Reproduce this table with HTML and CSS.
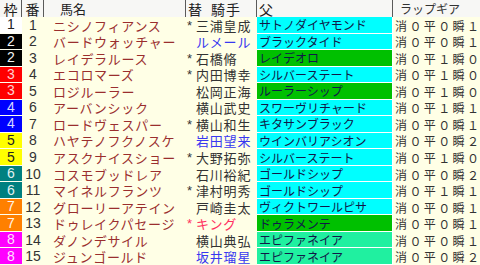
FILE: index.html
```html
<!DOCTYPE html>
<html lang="ja">
<head>
<meta charset="utf-8">
<link rel="stylesheet" href="styles.css">
</head>
<body>
<div class="table">
  <div class="row head">
    <div class="h c-waku">枠</div>
    <div class="h c-ban">番</div>
    <div class="h c-name">馬名</div>
    <div class="h c-jockey"><span class="kae">替</span><span class="jk">騎手</span></div>
    <div class="h c-sire">父</div>
    <div class="h c-lap">ラップギア</div>
  </div>

  <div class="row"><div class="waku w1">1</div><div class="ban">1</div><div class="name">ニシノフィアンス</div><div class="jockey"><span class="mark">*</span>三浦皇成</div><div class="sire s-cyan">サトノダイヤモンド</div><div class="lap">消０平０瞬１</div></div>
  <div class="row"><div class="waku w2">2</div><div class="ban">2</div><div class="name">バードウォッチャー</div><div class="jockey blue"><span class="mark"></span>ルメール</div><div class="sire s-cyan">ブラックタイド</div><div class="lap">消０平０瞬１</div></div>
  <div class="row"><div class="waku w2">2</div><div class="ban">3</div><div class="name">レイデラルース</div><div class="jockey"><span class="mark">*</span>石橋脩</div><div class="sire s-green">レイデオロ</div><div class="lap">消０平１瞬０</div></div>
  <div class="row"><div class="waku w3">3</div><div class="ban">4</div><div class="name">エコロマーズ</div><div class="jockey"><span class="mark">*</span>内田博幸</div><div class="sire s-cyan">シルバーステート</div><div class="lap">消０平１瞬０</div></div>
  <div class="row"><div class="waku w3">3</div><div class="ban">5</div><div class="name">ロジルーラー</div><div class="jockey"><span class="mark"></span>松岡正海</div><div class="sire s-green">ルーラーシップ</div><div class="lap">消０平１瞬０</div></div>
  <div class="row"><div class="waku w4">4</div><div class="ban">6</div><div class="name">アーバンシック</div><div class="jockey"><span class="mark"></span>横山武史</div><div class="sire s-cyan">スワーヴリチャード</div><div class="lap">消０平１瞬１</div></div>
  <div class="row"><div class="waku w4">4</div><div class="ban">7</div><div class="name">ロードヴェスパー</div><div class="jockey"><span class="mark">*</span>横山和生</div><div class="sire s-cyan">キタサンブラック</div><div class="lap">消０平０瞬１</div></div>
  <div class="row"><div class="waku w5">5</div><div class="ban">8</div><div class="name">ハヤテノフクノスケ</div><div class="jockey blue"><span class="mark"></span>岩田望来</div><div class="sire s-cyan">ウインバリアシオン</div><div class="lap">消０平０瞬２</div></div>
  <div class="row"><div class="waku w5">5</div><div class="ban">9</div><div class="name">アスクナイスショー</div><div class="jockey"><span class="mark">*</span>大野拓弥</div><div class="sire s-cyan">シルバーステート</div><div class="lap">消０平１瞬０</div></div>
  <div class="row"><div class="waku w6">6</div><div class="ban">10</div><div class="name">コスモブッドレア</div><div class="jockey"><span class="mark"></span>石川裕紀</div><div class="sire s-cyan">ゴールドシップ</div><div class="lap">消０平０瞬２</div></div>
  <div class="row"><div class="waku w6">6</div><div class="ban">11</div><div class="name">マイネルフランツ</div><div class="jockey"><span class="mark">*</span>津村明秀</div><div class="sire s-cyan">ゴールドシップ</div><div class="lap">消０平１瞬１</div></div>
  <div class="row"><div class="waku w7">7</div><div class="ban">12</div><div class="name">グローリーアテイン</div><div class="jockey"><span class="mark"></span>戸崎圭太</div><div class="sire s-cyan">ヴィクトワールピサ</div><div class="lap">消０平０瞬１</div></div>
  <div class="row"><div class="waku w7">7</div><div class="ban">13</div><div class="name">ドゥレイクパセージ</div><div class="jockey red"><span class="mark">*</span>キング</div><div class="sire s-green">ドゥラメンテ</div><div class="lap">消０平０瞬１</div></div>
  <div class="row"><div class="waku w8">8</div><div class="ban">14</div><div class="name">ダノンデサイル</div><div class="jockey"><span class="mark"></span>横山典弘</div><div class="sire s-sea">エピファネイア</div><div class="lap">消０平０瞬１</div></div>
  <div class="row"><div class="waku w8">8</div><div class="ban">15</div><div class="name">ジュンゴールド</div><div class="jockey blue"><span class="mark"></span>坂井瑠星</div><div class="sire s-sea">エピファネイア</div><div class="lap">消０平０瞬２</div></div>
</div>
</body>
</html>
```

FILE: styles.css
```css
html, body {
  margin: 0;
  padding: 0;
  background: #ffffe6;
}

.table {
  width: 480px;
  height: 265px;
  display: grid;
  grid-template-rows: 17px repeat(15, 1fr);
  font-family: "Noto Sans CJK JP", "Liberation Sans", sans-serif;
  overflow: hidden;
}

.row {
  display: grid;
  grid-template-columns: 22px 22px 142px 71px 136px 87px;
  min-height: 0;
}

.row > div {
  display: flex;
  align-items: center;
  overflow: hidden;
  white-space: nowrap;
  min-height: 0;
  line-height: 15px;
}

/* header */
.head {
  background: #f7f7f5;
}
.head > .h {
  font-size: 14px;
  line-height: 16px;
  color: #222;
  border-right: 1px solid #5a5a5a;
  box-sizing: border-box;
}
.head > .h.c-lap { border-right: none; padding-left: 7px; font-size: 12px; color: #333; }
.h.c-waku { justify-content: center; }
.h.c-ban { justify-content: center; }
.head > .h.c-name { padding-left: 16px; font-size: 13px; }
.h.c-jockey { padding-left: 2px; }
.h.c-jockey .jk { margin-left: 9px; letter-spacing: 1px; }
.h.c-sire { padding-left: 2px; }

/* body cells */
.waku {
  justify-content: center;
  font-family: "Liberation Sans", sans-serif;
  font-size: 14px;
  border-bottom: 1px solid #fffff0;
  box-sizing: border-box;
}
.w1 { background: #ffffff; color: #222; }
.w2 { background: #000000; color: #f4f4f4; }
.w3 { background: #ff0000; color: #ffd0d0; }
.w4 { background: #0000ff; color: #d8d8ff; }
.w5 { background: #ffff00; color: #222; }
.w6 { background: #008080; color: #e0f0f0; }
.w7 { background: #ff8000; color: #fff4e8; }
.w8 { background: #ff00ff; color: #ffe0ff; }

.ban {
  justify-content: center;
  font-family: "Liberation Sans", sans-serif;
  font-size: 14px;
  color: #333;
}

.name {
  padding-left: 9px;
  font-size: 13px;
  letter-spacing: 0.7px;
  color: #9a2e2e;
}

.jockey {
  font-size: 13px;
  letter-spacing: 0.8px;
  color: #333;
}
.jockey .mark {
  display: inline-block;
  width: 9px;
  flex: none;
  padding-left: 1px;
  font-family: "Liberation Sans", sans-serif;
  font-size: 13px;
  letter-spacing: 0;
}
.jockey.blue { color: #3838f0; }
.jockey.red { color: #ff3060; }

.sire {
  padding-left: 2px;
  font-size: 12px;
  color: #101848;
  border-bottom: 1px solid #ffffff;
  border-right: 1px solid #ffffff;
  box-sizing: border-box;
}
.s-cyan { background: #00ffff; }
.s-green { background: #00c000; }
.s-sea { background: #20f0a0; }

.row > .lap {
  padding-left: 2px;
  font-size: 12px;
  letter-spacing: 2.4px;
  color: #333;
  overflow: visible;
}
```
